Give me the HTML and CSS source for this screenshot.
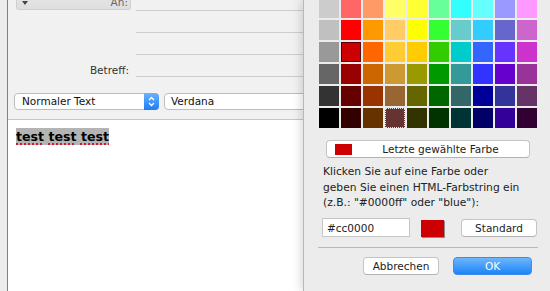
FILE: index.html
```html
<!DOCTYPE html>
<html lang="de">
<head>
  <meta charset="UTF-8" />
  <title>Verfassen - Textfarbe</title>
  <link rel="stylesheet" href="styles.css">
</head>
<body>
  <div class="screen">
    <!-- Compose window (left, partly hidden by the colour sheet) -->
    <div class="mail">
      <div class="compose">
        <div class="addressing">
          <div class="addr-row">
            <div class="addr-label">
              <div class="addr-type"><span class="caret"></span><span>An:</span></div>
            </div>
            <div class="addr-field"></div>
          </div>
          <div class="addr-row">
            <div class="addr-label"></div>
            <div class="addr-field"></div>
          </div>
          <div class="addr-row">
            <div class="addr-label"></div>
            <div class="addr-field"></div>
          </div>
          <div class="addr-row">
            <div class="addr-label">Betreff:</div>
            <div class="addr-field"></div>
          </div>
        </div>

        <div class="format-bar">
          <div class="select para">
            <span>Normaler Text</span>
            <span class="stepper">
              <svg width="15" height="15" viewBox="0 0 15 15">
                <path d="M5 6 L7.5 3.5 L10 6 M5 9 L7.5 11.5 L10 9" fill="none" stroke="#fff" stroke-width="1.3" />
              </svg>
            </span>
          </div>
          <div class="select font">Verdana</div>
        </div>

        <div class="editor">
          <span class="sel"><span class="typo">test</span> <span class="typo">test</span> <span class="typo">test</span></span>
        </div>
      </div>
    </div>

    <!-- Colour picker sheet -->
    <div class="picker">
      <div class="palette" id="palette"></div>

      <button class="btn last-color"><span class="chip"></span><span class="label">Letzte gewählte Farbe</span></button>

      <p class="hint">Klicken Sie auf eine Farbe oder<br>geben Sie einen HTML-Farbstring ein<br>(z.B.: "#0000ff" oder "blue"):</p>

      <div class="custom-row">
        <input type="text" class="hex" value="#cc0000">
        <span class="preview"></span>
        <button class="btn standard">Standard</button>
      </div>

      <div class="rule"></div>

      <div class="actions">
        <button class="btn cancel">Abbrechen</button>
        <button class="btn primary">OK</button>
      </div>
    </div>
  </div>

  <script>
    // visible rows of the colour palette
    const colors = [
      'cccccc', 'ff6666', 'ff9966', 'ffff66', 'ffff33', '66ff99', '33ffff', '66ffff', '9999ff', 'ff99ff',
      'c0c0c0', 'ff0000', 'ff9900', 'ffcc66', 'ffff00', '33ff33', '66cccc', '33ccff', '6666cc', 'cc66cc',
      '999999', 'cc0000', 'ff6600', 'ffcc33', 'ffcc00', '33cc00', '00cccc', '3366ff', '6633ff', 'cc33cc',
      '666666', '990000', 'cc6600', 'cc9933', '999900', '009900', '339999', '3333ff', '6600cc', '993399',
      '333333', '660000', '993300', '996633', '666600', '006600', '336666', '000099', '333399', '663366',
      '000000', '330000', '663300', '663333', '333300', '003300', '003333', '000066', '330099', '330033'
    ];

    const palette = document.getElementById('palette');
    colors.forEach(hex => {
      const cell = document.createElement('div');
      cell.className = 'swatch';
      if (hex === 'cc0000') cell.classList.add('selected');
      if (hex === '663333') cell.classList.add('focused');
      cell.style.background = '#' + hex;
      palette.appendChild(cell);
    });
  </script>
</body>
</html>
```

FILE: styles.css
```css
/* Base */
body {
  margin: 0;
  font-family: 'DejaVu Sans', 'Noto Sans', sans-serif;
  font-size: 10.5px;
  color: #222;
  background: #ececec;
}

.screen {
  display: flex;
  width: 550px;
  height: 291px;
  overflow: hidden;
}

/* Compose window */
.mail {
  width: 303px;
  flex: none;
  box-sizing: border-box;
  padding-left: 7px;
  background: #ececec;
  overflow: hidden;
}

.compose {
  height: 100%;
  border-left: 1px solid #808080;
  background: #f1f1f1;
  display: flex;
  flex-direction: column;
}

.addressing {
  margin-top: -11px;
  flex: none;
}

.addr-row {
  display: flex;
  height: 22px;
}

.addr-label {
  width: 128px;
  flex: none;
  box-sizing: border-box;
  padding: 8px 7px 0 0;
  line-height: 14px;
  text-align: right;
  color: #333;
}

.addr-field {
  flex: 1;
  border-bottom: 1px solid #cdcdcd;
}

.addr-type {
  display: flex;
  align-items: flex-end;
  justify-content: space-between;
  height: 20px;
  box-sizing: border-box;
  margin: -7px -2px 0 8px;
  padding: 0 2px 1px 5px;
  background: linear-gradient(#e9e9e9, #dedede);
  border: 1px solid #d0d0d0;
  border-top: none;
  border-radius: 0 0 3px 3px;
  color: #666;
  line-height: 12px;
}

.caret {
  align-self: flex-start;
  margin-top: 11px;
  width: 0;
  height: 0;
  border-left: 3px solid transparent;
  border-right: 3px solid transparent;
  border-top: 4px solid #444;
}

/* Format toolbar */
.format-bar {
  display: flex;
  gap: 5px;
  flex: none;
  padding: 16px 0 9px 6px;
  border-bottom: 1px solid #c6c6c6;
}

.select {
  display: flex;
  align-items: center;
  height: 17px;
  box-sizing: border-box;
  border: 1px solid #bcbcbc;
  border-radius: 4px;
  background: #fff;
  line-height: 15px;
  color: #111;
  flex: none;
}

.select.para {
  width: 145px;
  padding-left: 7px;
}

.select.font {
  width: 160px;
  padding-left: 6px;
}

.stepper {
  display: flex;
  align-items: center;
  margin: -1px -1px -1px auto;
  width: 15px;
  height: 17px;
  background: linear-gradient(#6cb2fb, #1f7df5);
  border-radius: 0 4px 4px 0;
}

/* Message body */
.editor {
  flex: 1;
  background: #fff;
  padding: 8px 0 0 8px;
  font-weight: bold;
  font-size: 12.6px;
  color: #000;
}

.sel {
  display: inline-block;
  line-height: 17px;
  background: #b4b4b4;
}

.typo {
  text-decoration: underline dotted #e0102a;
  text-decoration-thickness: 2px;
  text-underline-offset: 2px;
}

/* Colour picker */
.picker {
  flex: 1;
  background: #ececec;
  border-left: 1px solid #b8b8b8;
  box-shadow: -3px 0 8px rgba(0, 0, 0, 0.13);
  padding-left: 15px;
}

.palette {
  display: grid;
  grid-template-columns: repeat(10, 20px);
  grid-auto-rows: 20px;
  gap: 2px;
  margin-top: -2px;
}

.swatch {
  box-sizing: border-box;
}

.swatch.selected {
  box-shadow: inset 0 0 0 1px rgba(0, 0, 0, 0.55);
}

.swatch.focused {
  border: 1px dotted #e4e4e4;
}

.btn {
  height: 18px;
  box-sizing: border-box;
  padding: 0;
  border: 1px solid #c4c4c4;
  border-bottom-color: #b2b2b2;
  border-radius: 4px;
  background: #fff;
  font-family: inherit;
  font-size: 10.5px;
  line-height: 16px;
  color: #222;
}

.last-color {
  display: flex;
  align-items: center;
  width: 204px;
  margin: 12px 0 0 7px;
  padding-left: 8px;
}

.chip {
  width: 17px;
  height: 11px;
  background: #cc0000;
  flex: none;
}

.last-color .label {
  flex: 1;
  text-align: center;
}

.hint {
  margin: 6px 0 0 4px;
  font-size: 10.7px;
  line-height: 15.7px;
  color: #222;
}

.custom-row {
  display: flex;
  align-items: flex-start;
  height: 19px;
  margin-top: 7px;
}

.hex {
  width: 88px;
  height: 19px;
  box-sizing: border-box;
  margin: 0 0 0 3px;
  padding: 0 4px;
  border: 1px solid #c6c6c6;
  background: #fff;
  font-family: inherit;
  font-size: 10.5px;
  color: #222;
  outline: none;
}

.preview {
  width: 23px;
  height: 17px;
  margin: 2px 0 0 11px;
  background: #cc0000;
  box-shadow: 1px 1px 0 #8c8c8c;
}

.standard {
  width: 76px;
  margin: 1px 0 0 17px;
}

.rule {
  width: 220px;
  margin: 10px 0 0 -1px;
  border-top: 1px solid #b9b9b9;
}

.actions {
  display: flex;
  gap: 14px;
  margin: 9px 0 0 44px;
}

.cancel {
  width: 76px;
}

.primary {
  width: 79px;
  border-color: #3f8be6;
  background: linear-gradient(#6eb6fc, #1c84f8);
  color: #fff;
}
```
